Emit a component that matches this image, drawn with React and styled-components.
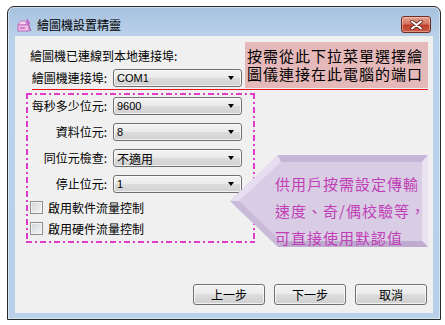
import React from "react";
import styled, { createGlobalStyle } from "styled-components";

const GlobalStyle = createGlobalStyle`
  body {
    margin: 0;
    background: #fff;
    font-family: "Noto Sans CJK TC", "Noto Sans", sans-serif;
    font-size: 12px;
    color: #000;
  }
`;

const magenta = "#e03acb";

const Window = styled.div`
  margin: 6px 0 0 7px;
  width: 434px;
  height: 314px;
  box-sizing: border-box;
  border: 1px solid #2a2a2a;
  border-radius: 7px 7px 0 0;
  background: linear-gradient(#a7c1de 0, #bad1ea 30px, #b9d0ea 100%);
  box-shadow: inset 0 0 0 1px rgba(255, 255, 255, 0.45), 0 1px 0 #6fc6e0;
  display: flex;
  flex-direction: column;
`;

const TitleBar = styled.div`
  height: 29px;
  box-sizing: border-box;
  padding: 6px 9px 0 9px;
  display: flex;
  align-items: center;
  gap: 5px;
`;

const TitleText = styled.span`
  flex: 1;
  font-size: 12px;
  line-height: 16px;
`;

const CloseButton = styled.div`
  width: 30px;
  height: 17px;
  box-sizing: border-box;
  border: 1px solid #6e2b22;
  border-radius: 3px;
  background: linear-gradient(#e6a393, #d47460 45%, #c0412d 55%, #cc5b44);
  box-shadow: inset 0 0 0 1px rgba(255, 220, 210, 0.45);
  display: flex;
  align-items: center;
  justify-content: center;
`;

const Content = styled.div`
  flex: 1;
  margin: 0 7px 6px 7px;
  background: #f0f0f0;
  position: relative;
  display: flex;
  flex-direction: column;
  padding: 6px 0 8px 0;
`;

const TopSection = styled.div`
  display: flex;
  padding-right: 5px;
`;

const LeftColumn = styled.div`
  padding-left: 13px;
`;

const InfoText = styled.div`
  margin-top: 6px;
  padding-left: 2px;
  line-height: 16px;
`;

const FormGrid = styled.div`
  display: grid;
  grid-template-columns: 85px 129px;
  row-gap: 8px;
  align-items: center;
  margin-top: ${(p) => p.$top || 0}px;
`;

const Label = styled.div`
  text-align: right;
  padding-right: 6px;
  line-height: 16px;
  white-space: nowrap;
`;

const Select = styled.div`
  height: 18px;
  box-sizing: border-box;
  border: 1px solid #707070;
  border-radius: 3px;
  background: linear-gradient(#f3f3f3, #eaeaea 50%, #dcdcdc 50%, #d0d0d0);
  box-shadow: inset 0 0 0 1px rgba(255, 255, 255, 0.7);
  display: flex;
  align-items: center;
  padding: 0 7px 0 3px;
  font-family: ${(p) =>
    p.$cjk ? `"Noto Sans CJK TC", sans-serif` : `"Liberation Sans", sans-serif`};
  font-size: ${(p) => (p.$cjk ? 12 : 11)}px;

  span {
    flex: 1;
  }

  &::after {
    content: "";
    border-left: 3.5px solid transparent;
    border-right: 3.5px solid transparent;
    border-top: 4px solid #000;
  }
`;

const PinkNote = styled.div`
  margin-left: auto;
  width: 183px;
  height: 46px;
  box-sizing: border-box;
  background: #e5b9b9;
  padding: 5px 0 0 2px;
  display: flex;
  flex-direction: column;
`;

const NoteLine = styled.div`
  height: 18px;
  font-size: 15px;
  letter-spacing: 1px;
  line-height: 18px;
  white-space: nowrap;
`;

const RedRule = styled.div`
  height: 1px;
  background: #e8161b;
  margin: 1px 5px 0 17px;
`;

const dashH = `repeating-linear-gradient(to right, ${magenta} 0 6px, transparent 6px 9px, ${magenta} 9px 11px, transparent 11px 14px)`;
const dashV = `repeating-linear-gradient(to bottom, ${magenta} 0 6px, transparent 6px 9px, ${magenta} 9px 11px, transparent 11px 14px)`;

const DashedBox = styled.div`
  margin: 3px 0 0 11px;
  width: 229px;
  height: 150px;
  box-sizing: border-box;
  padding: 4px 0 0 2px;
  background: ${dashH} top left / 100% 2px no-repeat,
    ${dashH} bottom left / 100% 2px no-repeat,
    ${dashV} top left / 2px 100% no-repeat,
    ${dashV} top right / 2px 100% no-repeat;
`;

const CheckRow = styled.div`
  display: flex;
  align-items: center;
  gap: 5px;
  height: 16px;
  padding-left: 2px;
  margin-top: ${(p) => p.$top}px;
`;

const CheckBox = styled.div`
  width: 13px;
  height: 13px;
  box-sizing: border-box;
  border: 1px solid #8e8f8f;
  background: linear-gradient(135deg, #d0d3d7, #f7f7f7);
  box-shadow: inset 0 0 0 1px #f4f4f4;
`;

const Callout = styled.div`
  position: absolute;
  left: 215px;
  top: 119px;
  width: 198px;
  height: 92px;

  svg {
    position: absolute;
    left: 0;
    top: 0;
  }
`;

const CalloutText = styled.div`
  position: relative;
  padding: 15px 0 0 45px;
  color: #c03fb5;
  font-size: 15px;
  letter-spacing: 1px;
  line-height: 27px;
  white-space: nowrap;
`;

const ButtonRow = styled.div`
  margin-top: auto;
  display: flex;
  justify-content: flex-end;
  gap: 9px;
  padding-right: 6px;
`;

const Button = styled.div`
  width: 72px;
  height: 21px;
  box-sizing: border-box;
  border: 1px solid #707070;
  border-radius: 3px;
  background: linear-gradient(#f2f2f2, #ebebeb 50%, #dddddd 50%, #cfcfcf);
  box-shadow: inset 0 0 0 1px rgba(255, 255, 255, 0.7);
  display: flex;
  align-items: center;
  justify-content: center;
  line-height: 16px;
`;

const AppIcon = () => (
  <svg width="15" height="15" viewBox="0 0 15 15">
    <path d="M1 8 L4 4 L9 4 L9 8 Z" fill="#f6d4f0" stroke="#c868c0" strokeWidth="0.8" />
    <rect x="1" y="8" width="11" height="6" fill="#eec0e8" stroke="#b855b0" strokeWidth="0.8" />
    <rect x="3" y="10" width="5" height="2" fill="#d27ccc" />
    <path d="M10 1 L13 6 L11.5 9 L9.5 5 Z" fill="#c060c8" />
    <path d="M12 9 L14 14" stroke="#a050a8" strokeWidth="1" />
  </svg>
);

const CloseGlyph = () => (
  <svg width="13" height="10" viewBox="0 0 13 10">
    <path d="M2 1.5 L11 8.5 M11 1.5 L2 8.5" stroke="#6a2a24" strokeWidth="3.6" strokeLinecap="round" />
    <path d="M2 1.5 L11 8.5 M11 1.5 L2 8.5" stroke="#fff" strokeWidth="2" strokeLinecap="round" />
  </svg>
);

const CalloutShape = () => (
  <svg width="198" height="92" viewBox="0 0 198 92">
    <polygon points="0,46 48,0 198,0 198,92 48,92" fill="#d9cde6" />
    <polygon points="0,46 48,0 51,7 9,46" fill="#e6ddf0" />
    <polygon points="48,0 198,0 192,7 51,7" fill="#c6b6d6" />
    <polygon points="198,0 198,92 192,86 192,7" fill="#e9e2f1" />
    <polygon points="198,92 48,92 51,86 192,86" fill="#bdacd0" />
    <polygon points="48,92 0,46 9,46 51,86" fill="#c9bad9" />
  </svg>
);

const fields = [
  { label: "每秒多少位元:", value: "9600" },
  { label: "資料位元:", value: "8" },
  { label: "同位元檢查:", value: "不適用", cjk: true },
  { label: "停止位元:", value: "1" },
];

export default function App() {
  return (
    <>
      <GlobalStyle />
      <Window>
        <TitleBar>
          <AppIcon />
          <TitleText>繪圖機設置精靈</TitleText>
          <CloseButton>
            <CloseGlyph />
          </CloseButton>
        </TitleBar>
        <Content>
          <TopSection>
            <LeftColumn>
              <InfoText>繪圖機已連線到本地連接埠:</InfoText>
              <FormGrid $top={5}>
                <Label>繪圖機連接埠:</Label>
                <Select>
                  <span>COM1</span>
                </Select>
              </FormGrid>
            </LeftColumn>
            <PinkNote>
              <NoteLine>按需從此下拉菜單選擇繪</NoteLine>
              <NoteLine>圖儀連接在此電腦的端口</NoteLine>
            </PinkNote>
          </TopSection>
          <RedRule />
          <DashedBox>
            <FormGrid>
              {fields.map((f) => (
                <React.Fragment key={f.label}>
                  <Label>{f.label}</Label>
                  <Select $cjk={f.cjk}>
                    <span>{f.value}</span>
                  </Select>
                </React.Fragment>
              ))}
            </FormGrid>
            <CheckRow $top={6}>
              <CheckBox />
              <span>啟用軟件流量控制</span>
            </CheckRow>
            <CheckRow $top={5}>
              <CheckBox />
              <span>啟用硬件流量控制</span>
            </CheckRow>
          </DashedBox>
          <ButtonRow>
            <Button>上一步</Button>
            <Button>下一步</Button>
            <Button>取消</Button>
          </ButtonRow>
          <Callout>
            <CalloutShape />
            <CalloutText>
              供用戶按需設定傳輸
              <br />
              速度、奇/偶校驗等，
              <br />
              可直接使用默認值
            </CalloutText>
          </Callout>
        </Content>
      </Window>
    </>
  );
}
